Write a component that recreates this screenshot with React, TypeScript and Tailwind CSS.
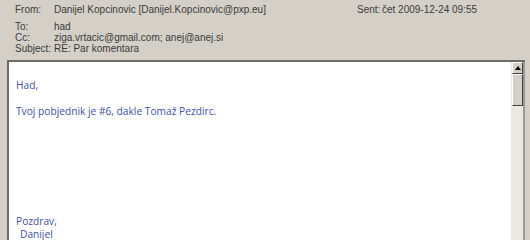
import React from 'react'

const headerRows = [
  { label: 'To:', value: 'had' },
  { label: 'Cc:', value: 'ziga.vrtacic@gmail.com; anej@anej.si' },
  { label: 'Subject:', value: 'RE: Par komentara' },
]

function ScrollBar() {
  return (
    <div className="w-[12px] flex flex-col bg-[#ece9e4] border-l border-[#e8e6e2]">
      <div className="h-[12px] flex items-center justify-center bg-[#d4d0c8] border-t border-l border-white border-r border-b border-r-[#404040] border-b-[#404040]">
        <svg width="6" height="4" viewBox="0 0 6 4">
          <path d="M3 0 L6 4 L0 4 Z" fill="#000" />
        </svg>
      </div>
      <div className="h-[32px] bg-[#d4d0c8] border-t border-l border-white border-r border-b border-r-[#404040] border-b-[#404040]" />
      <div className="flex-1" />
    </div>
  )
}

export default function App() {
  return (
    <div className="w-[530px] h-[240px] overflow-hidden bg-[#d4d0c8] flex flex-col font-['Liberation_Sans',Arial,sans-serif] text-[10px] text-[#3a3a3a]">
      {/* header */}
      <div className="pl-[15px] pt-[2px] flex whitespace-nowrap">
        <span className="w-[39px] shrink-0">From:</span>
        <span className="w-[303px] shrink-0">Danijel Kopcinovic [Danijel.Kopcinovic@pxp.eu]</span>
        <span className="w-[25px] shrink-0">Sent:</span>
        <span>čet 2009-12-24 09:55</span>
      </div>
      <div className="pl-[15px] pt-[4px] flex flex-col">
        {headerRows.map(r => (
          <div key={r.label} className="flex h-[11px] items-center">
            <span className="w-[39px]">{r.label}</span>
            <span>{r.value}</span>
          </div>
        ))}
      </div>

      {/* message body */}
      <div className="mt-[6px] ml-[7px] mr-[5px] flex-1 flex border-t-2 border-l-2 border-[#6e6c68]">
        <div className="flex-1 bg-white pl-[7px] pt-[17px] font-['Open_Sans',sans-serif] text-[10.2px] text-[#4150a0] leading-[12px]">
          <div>Had,</div>
          <div className="mt-[14px]">Tvoj pobjednik je #6, dakle Tomaž Pezdirc.</div>
          <div className="mt-[98px]">Pozdrav,</div>
          <div className="mt-[1px] pl-[4px]">Danijel</div>
        </div>
        <ScrollBar />
        <div className="w-[2px] bg-[#9c9a96]" />
      </div>
    </div>
  )
}
